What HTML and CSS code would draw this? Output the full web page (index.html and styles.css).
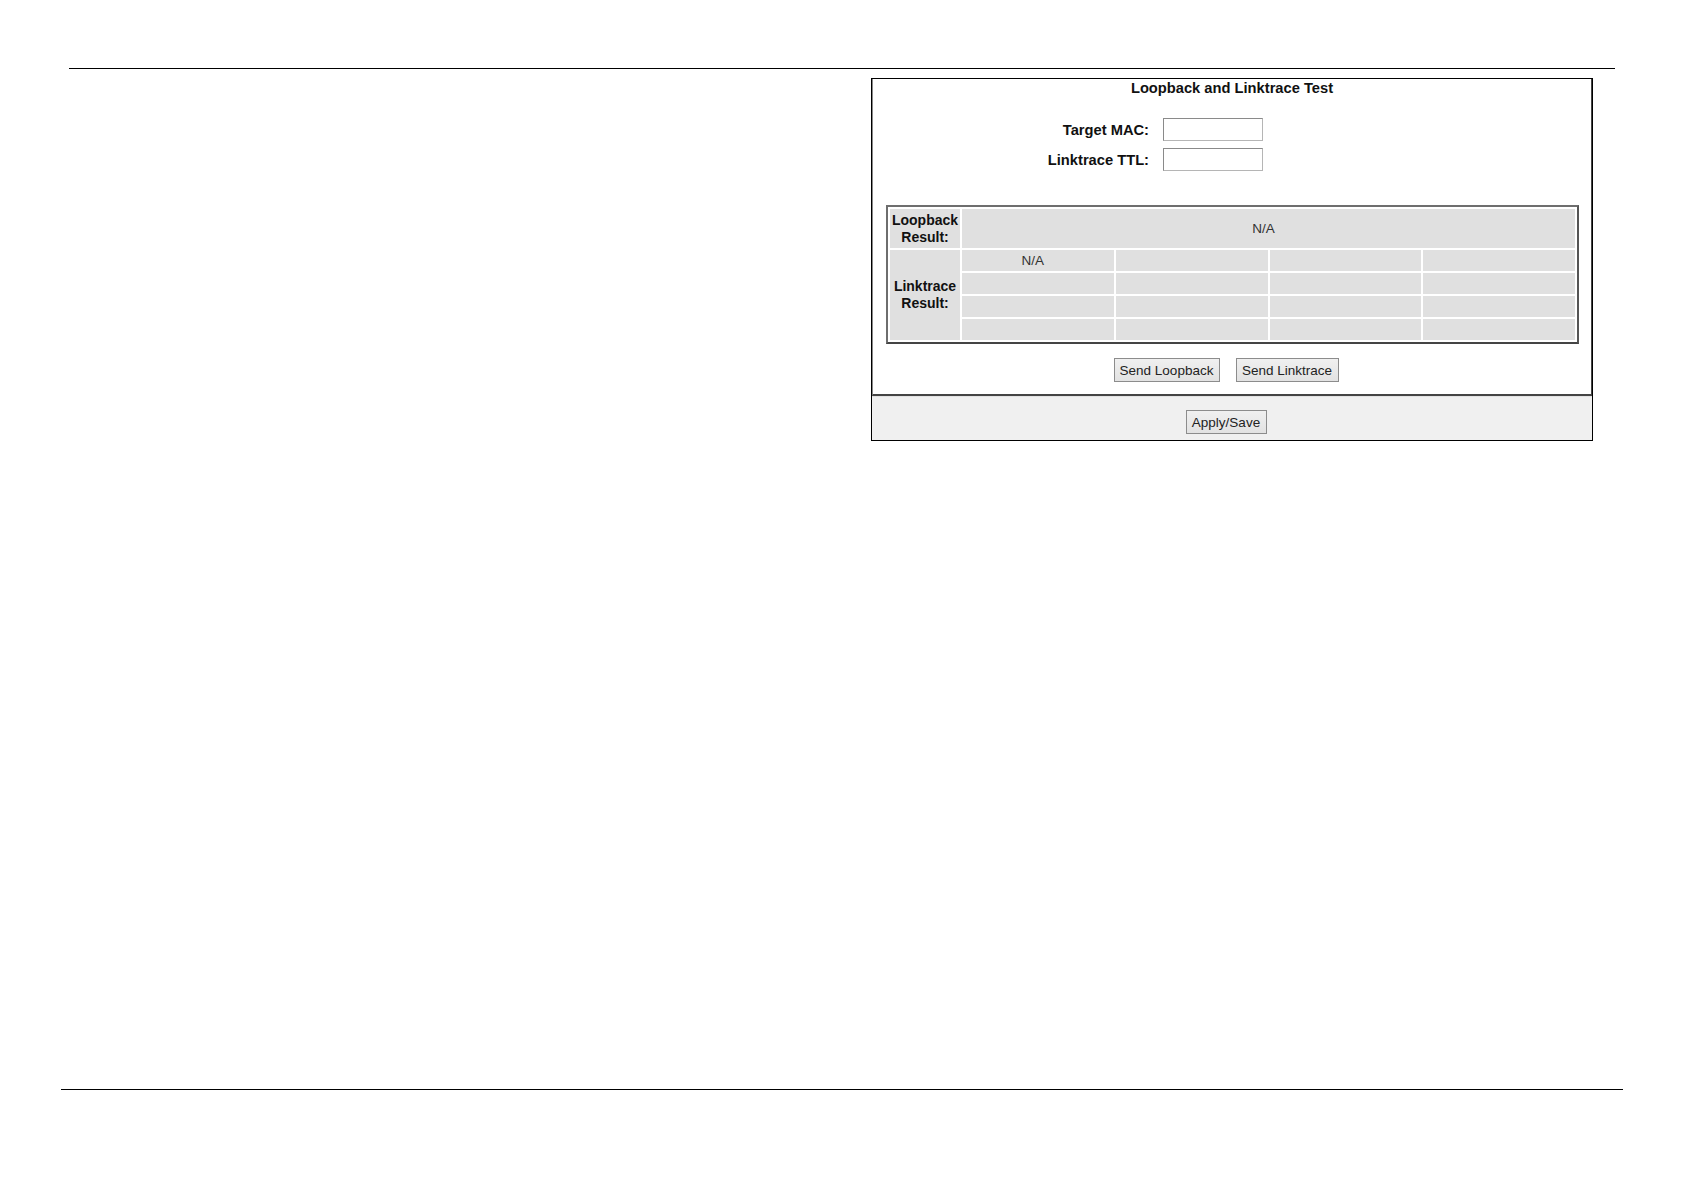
FILE: index.html
```html
<!DOCTYPE html>
<html>
<head>
<meta charset="utf-8">
<link rel="stylesheet" href="styles.css">
</head>
<body>
<div class="page">
  <div class="rule rule-top"></div>
  <div class="content">
    <div class="panel">
      <div class="section">
        <div class="title">Loopback and Linktrace Test</div>
        <div class="form">
          <label class="label">Target MAC:</label>
          <input class="field" type="text">
          <label class="label">Linktrace TTL:</label>
          <input class="field" type="text">
        </div>
        <table class="results">
          <colgroup>
            <col class="c-label">
            <col><col><col><col>
          </colgroup>
          <tr class="row-lb">
            <th>Loopback<br>Result:</th>
            <td colspan="4">N/A</td>
          </tr>
          <tr class="row-lt">
            <th rowspan="4">Linktrace<br>Result:</th>
            <td>N/A</td><td></td><td></td><td></td>
          </tr>
          <tr class="row-lt"><td></td><td></td><td></td><td></td></tr>
          <tr class="row-lt"><td></td><td></td><td></td><td></td></tr>
          <tr class="row-lt"><td></td><td></td><td></td><td></td></tr>
        </table>
        <div class="actions">
          <button class="btn btn-lb" type="button">Send Loopback</button>
          <button class="btn btn-lt" type="button">Send Linktrace</button>
        </div>
      </div>
      <div class="footer">
        <button class="btn btn-save" type="button">Apply/Save</button>
      </div>
    </div>
  </div>
  <div class="rule rule-bottom"></div>
</div>
</body>
</html>
```

FILE: styles.css
```css
html, body {
  margin: 0;
  padding: 0;
  background: #ffffff;
}

body {
  font-family: "Liberation Sans", Arial, sans-serif;
  color: #111;
}

.page {
  width: 1684px;
  height: 1191px;
  padding-top: 68px;
  box-sizing: border-box;
}

.rule {
  height: 1px;
  background: #000;
}

.rule-top {
  margin-left: 69px;
  width: 1546px;
}

.rule-bottom {
  margin-left: 61px;
  width: 1562px;
}

.content {
  height: 1020px;
  padding-top: 9px;
  box-sizing: border-box;
}

.panel {
  margin-left: 871px;
  width: 722px;
  border: 1px solid #000;
  box-sizing: border-box;
  background: #fff;
}

.section {
  border-left: 1px solid #888;
  border-right: 1px solid #444;
  border-bottom: 2px solid #444;
  padding-bottom: 12px;
}

.title {
  font-weight: bold;
  font-size: 14.7px;
  line-height: 18px;
  text-align: center;
  color: #111;
}

.form {
  display: grid;
  grid-template-columns: 276px 100px;
  column-gap: 14px;
  row-gap: 7px;
  margin-top: 21px;
  align-items: center;
}

.label {
  text-align: right;
  font-weight: bold;
  font-size: 14.7px;
  color: #111;
}

.field {
  width: 100px;
  height: 23px;
  box-sizing: border-box;
  border: 1px solid;
  border-color: #8a8a8a #b5b5b5 #b5b5b5 #8a8a8a;
  background: #fff;
  margin: 0;
  padding: 0 3px;
}

.results {
  margin-top: 34px;
  margin-left: 13px;
  width: 693px;
  table-layout: fixed;
  border-collapse: separate;
  border-spacing: 2px;
  border: 2px solid;
  border-color: #6e6e6e #555 #444 #6e6e6e;
}

.c-label {
  width: 70px;
}

.results th,
.results td {
  background: #e0e0e0;
  padding: 0;
  text-align: center;
  vertical-align: middle;
  font-size: 13.5px;
}

.results th {
  font-weight: bold;
  font-size: 14px;
  line-height: 17px;
  color: #111;
}

.results td {
  color: #333;
  padding-right: 10px;
}

.row-lb th,
.row-lb td {
  height: 39px;
}

.row-lt td {
  height: 21px;
}

.actions {
  display: flex;
  justify-content: center;
  gap: 16px;
  margin-top: 14px;
  padding-right: 12px;
}

.btn {
  height: 24px;
  box-sizing: border-box;
  margin: 0;
  padding: 0;
  border: 1px solid #8c8c8c;
  background: linear-gradient(#f0f0f0, #e2e2e2);
  font-family: "Liberation Sans", Arial, sans-serif;
  font-size: 13.5px;
  color: #222;
}

.btn-lb {
  width: 106px;
}

.btn-lt {
  width: 103px;
}

.btn-save {
  width: 81px;
}

.footer {
  background: #f0f0f0;
  border-top: 1px solid #e2e2e2;
  padding: 13px 12px 6px 0;
  display: flex;
  justify-content: center;
}
```
